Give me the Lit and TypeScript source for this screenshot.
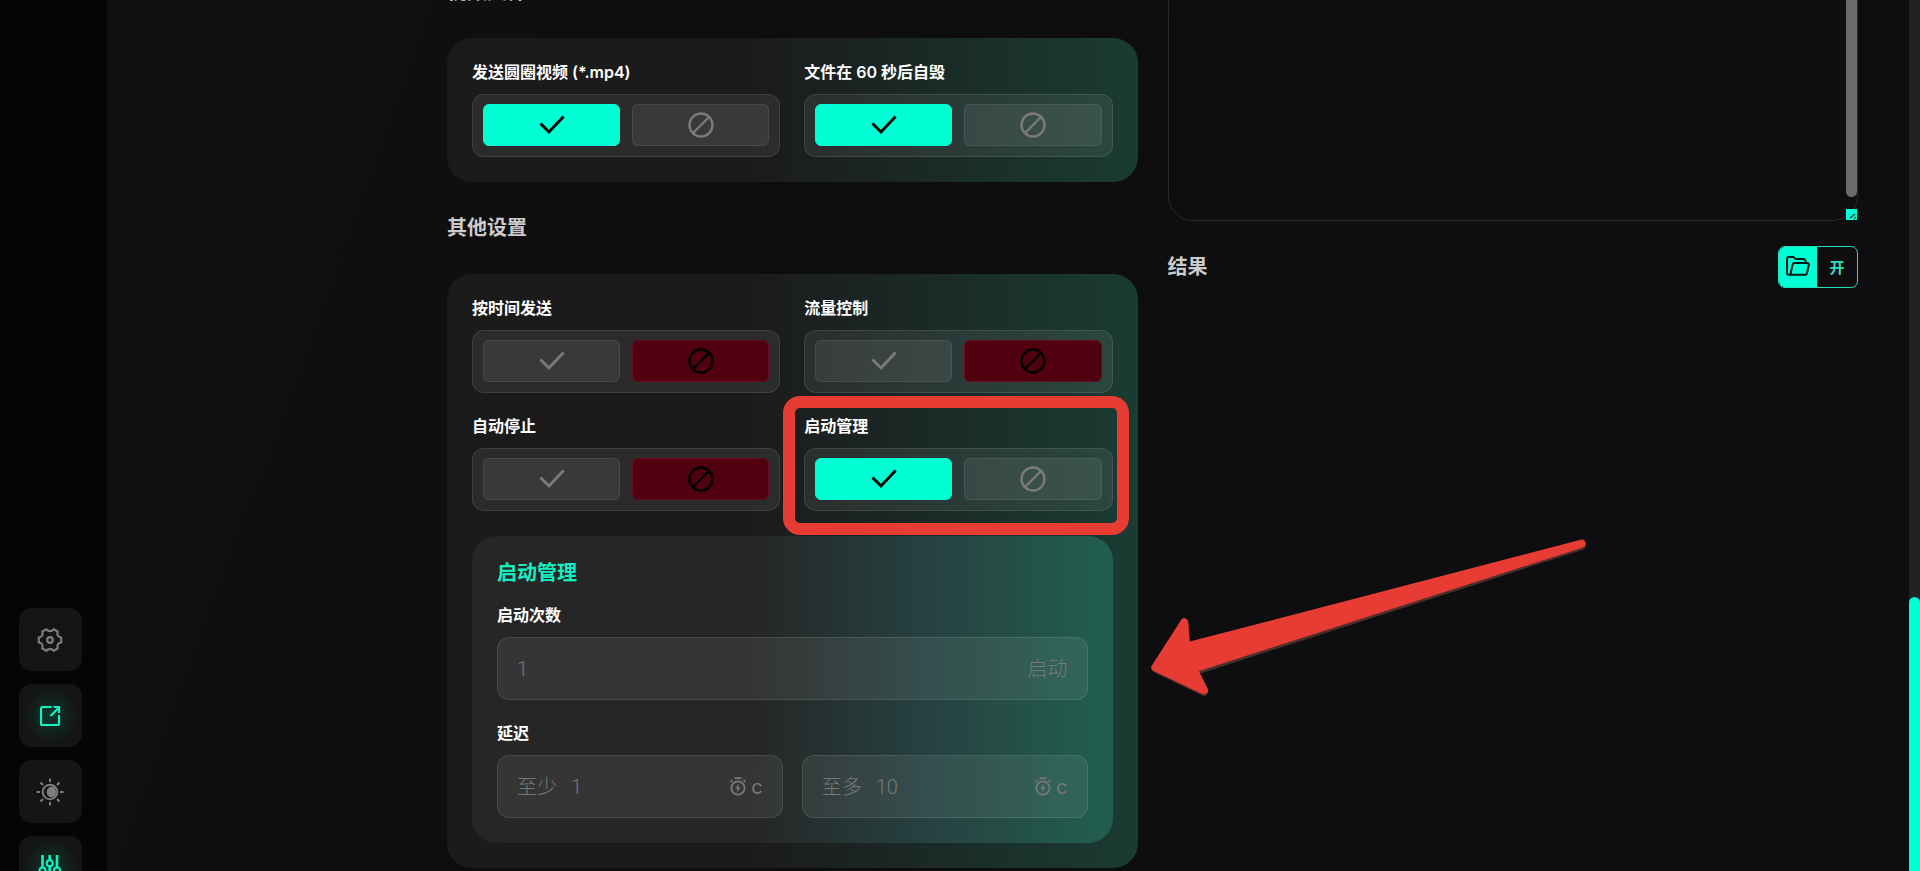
import { LitElement, html, css, svg, nothing } from "lit";
import { customElement, property, state } from "lit/decorators.js";
import { classMap } from "lit/directives/class-map.js";

const checkIcon = html`<svg width="26" height="20" viewBox="0 0 26 20" fill="none" stroke="currentColor" stroke-width="2.9" aria-hidden="true">
  <path d="M1.500 8.500 10 17 24.600 1.600" />
</svg>`;

const banIcon = html`<svg width="26" height="26" viewBox="0 0 26 26" fill="none" stroke="currentColor" stroke-width="2.4" aria-hidden="true">
  <circle cx="13" cy="13" r="11.500" /><path d="M5 21 21 5" />
</svg>`;

const timerIcon = html`<svg width="16" height="19" viewBox="0 0 16 19" fill="none" stroke="currentColor" stroke-width="1.9" aria-hidden="true">
  <path d="M4.600 1.200h6.800" /><circle cx="8" cy="11" r="6.600" />
  <path d="M.8 4.800 2.400 3.200M15.200 4.800 13.600 3.200" />
  <path d="M9 6.600 5.200 11.800h2.300l-.6 3.600 3.800-5.200H8.400z" fill="currentColor" stroke="none" />
</svg>`;

const folderIcon = html`<svg width="24" height="20" viewBox="0 0 24 20" fill="none" stroke="currentColor" stroke-width="2" stroke-linejoin="round" aria-hidden="true">
  <path d="M4.400 18.800H3A2 2 0 0 1 1 16.800V3A2 2 0 0 1 3 1h3.800a2 2 0 0 1 1.500.7L9.600 3h7.600a2.400 2.400 0 0 1 2.400 2.400v1.400" />
  <path d="M4.400 18.800 6.600 8.600a2 2 0 0 1 2-1.600h12.600a1.600 1.600 0 0 1 1.600 2l-1.800 8.200a2 2 0 0 1-2 1.600z" />
</svg>`;

const navIcons = {
  gear: svg`<path stroke-linejoin="round" stroke-width="2.200" d="M24.200 15.400Q19.100 16.500 20.800 21.400L16.700 23.800Q13 20 9.300 23.800L5.200 21.400Q6.900 16.500 1.800 15.400V10.600Q6.900 9.500 5.200 4.600L9.300 2.200Q13 6 16.700 2.200L20.800 4.600Q19.100 9.500 24.200 10.600Z" /><circle cx="13" cy="13" r="2.800" stroke-width="2.200" />`,
  open: svg`<path stroke-width="2.200" d="M14.500 4H5.500a1.500 1.500 0 0 0-1.500 1.500v15A1.500 1.500 0 0 0 5.500 22h15a1.500 1.500 0 0 0 1.500-1.500V12M13.500 13 22 4.500M16.500 4H22v6" />`,
  theme: svg`<circle cx="13" cy="13" r="7.300" /><path d="M17 8a5.400 5.400 0 1 0 0 10a7 7 0 0 0 0-10z" fill="currentColor" stroke="none" /><path d="M13 3V-.5M13 23v3.500M3 13H-.5M23 13h3.500M6 6 3.500 3.500M20 6l2.500-2.500M6 20l-2.500 2.500M20 20l2.500 2.500" />`,
  sliders: svg`<path stroke-width="2.600" d="M5.500 0V12.500M5.500 18.500v5M12.700 0v5.300M12.700 11.500v12M20 0V12.500M20 18.500v5" /><circle cx="5.500" cy="15.500" r="3" /><circle cx="12.700" cy="8.200" r="3" /><circle cx="20" cy="15.500" r="3" />`,
};

type NavIcon = keyof typeof navIcons;

@customElement("side-nav")
class SideNav extends LitElement {
  static styles = css`
    :host {
      display: flex;
      flex: 0 0 107px;
      flex-direction: column;
      justify-content: flex-end;
      background: #050505;
    }
    .list {
      display: flex;
      flex-direction: column;
      gap: 13px;
      margin: 0 0 -28px 19px;
    }
    .item {
      display: grid;
      place-items: center;
      width: 63px;
      height: 63px;
      padding: 0 2px 0 0;
      border: 0;
      border-radius: 13px;
      background: #151515;
      color: #7d7d7d;
    }
    .item.active {
      color: #12f3c5;
      background: radial-gradient(circle, #0c3a2f 0, #11251f 32%, #151515 62%);
    }
  `;

  private items: { icon: NavIcon; label: string; active: boolean }[] = [
    { icon: "gear", label: "设置", active: false },
    { icon: "open", label: "打开", active: true },
    { icon: "theme", label: "主题", active: false },
    { icon: "sliders", label: "参数", active: true },
  ];

  render() {
    return html`<nav class="list">
      ${this.items.map(
        (i) => html`<button class=${classMap({ item: true, active: i.active })} aria-label=${i.label}>
          <svg width="26" height="26" viewBox="0 0 26 26" fill="none" stroke="currentColor" stroke-width="2" overflow="visible" aria-hidden="true">
            ${navIcons[i.icon]}
          </svg>
        </button>`
      )}
    </nav>`;
  }
}

@customElement("toggle-field")
class ToggleField extends LitElement {
  static styles = css`
    :host {
      display: block;
      min-width: 0;
    }
    .label {
      margin-bottom: 13px;
      color: #fff;
      font-size: 16px;
      font-weight: 600;
      line-height: 18px;
      white-space: nowrap;
    }
    .group {
      display: grid;
      grid-template-columns: 1fr 1fr;
      gap: 12px;
      box-sizing: border-box;
      height: 63px;
      padding: 9px 10px 10px;
      border: 1px solid rgba(255, 255, 255, 0.1);
      border-radius: 12px;
      background: rgba(255, 255, 255, 0.07);
    }
    .option {
      display: grid;
      place-items: center;
      padding: 0;
      border: 1px solid rgba(255, 255, 255, 0.08);
      border-radius: 6px;
      background: rgba(255, 255, 255, 0.07);
      color: #7a7a7a;
    }
    .option.on {
      border-color: #00ffd5;
      background: #00ffd5;
      color: #000;
    }
    .option.off {
      border-color: #6b0a1c;
      background: #50000f;
      color: #000;
    }
  `;

  @property() label = "";
  @property({ type: Boolean }) checked = false;

  render() {
    return html`
      <div class="label" id="label">${this.label}</div>
      <div class="group" role="group" aria-labelledby="label">
        <button class=${classMap({ option: true, on: this.checked })} aria-label="启用" aria-pressed=${this.checked} @click=${() => (this.checked = true)}>
          ${checkIcon}
        </button>
        <button class=${classMap({ option: true, off: !this.checked })} aria-label="停用" aria-pressed=${!this.checked} @click=${() => (this.checked = false)}>
          ${banIcon}
        </button>
      </div>
    `;
  }
}

@customElement("value-box")
class ValueBox extends LitElement {
  static styles = css`
    :host {
      display: block;
      min-width: 0;
    }
    .box {
      display: flex;
      align-items: center;
      gap: 14px;
      box-sizing: border-box;
      height: 63px;
      padding: 0 19px;
      border: 1px solid rgba(255, 255, 255, 0.1);
      border-radius: 12px;
      background: rgba(255, 255, 255, 0.07);
      color: #787878;
      font-size: 20px;
      font-weight: 300;
      line-height: 26px;
    }
    .input {
      flex: 1;
      min-width: 0;
      padding: 0;
      border: 0;
      outline: 0;
      background: none;
      color: inherit;
      font: inherit;
      font-family: Roboto, sans-serif;
    }
    .unit {
      display: flex;
      align-items: center;
      gap: 5px;
    }
    .seconds {
      font-family: Inter, sans-serif;
      font-weight: 400;
    }
  `;

  @property() prefixText = "";
  @property() suffix = "";
  @property() value = "";
  @property() name = "";

  render() {
    return html`<label class="box">
      ${this.prefixText ? html`<span>${this.prefixText}</span>` : nothing}
      <input class="input" aria-label=${this.name} .value=${this.value} />
      ${this.suffix
        ? html`<span>${this.suffix}</span>`
        : html`<span class="unit">${timerIcon}<span class="seconds">c</span></span>`}
    </label>`;
  }
}

@customElement("app-root")
class AppRoot extends LitElement {
  static styles = css`
    :host {
      display: flex;
      height: 100vh;
      overflow: hidden;
      background: linear-gradient(110deg, #121212 0, #0e0e0e 30%, #0e0d0f 60%, #0e0d0f 100%);
      font-family: Inter, "Noto Sans CJK SC", sans-serif;
    }
    .main {
      display: grid;
      flex: 1;
      grid-template-columns: minmax(0, 1fr) minmax(0, 1fr);
      align-items: start;
      gap: 30px;
      min-width: 0;
      padding: 0 51px 0 340px;
    }
    .settings {
      display: grid;
      gap: 32px;
      margin-top: -22px;
    }
    .heading {
      margin: 0;
      color: #cbcbcb;
      font-size: 20px;
      font-weight: 700;
      line-height: 28px;
    }
    .card {
      position: relative;
      display: grid;
      grid-template-columns: minmax(0, 1fr) minmax(0, 1fr);
      gap: 24px;
      padding: 25px;
      border-radius: 25px;
      background: linear-gradient(90deg, #1b1b1b 44%, #1b2725 65%, #1a3c33 100%);
    }
    .panel {
      grid-column: 1 / -1;
      margin-top: 1px;
      padding: 25px;
      border-radius: 25px;
      background: linear-gradient(90deg, #262626 44%, #264040 70%, #225f4f 100%);
    }
    .panel-title {
      margin: 0 0 21px;
      color: #14efc2;
      font-size: 20px;
      font-weight: 700;
      line-height: 24px;
    }
    .label {
      margin-bottom: 13px;
      color: #fff;
      font-size: 16px;
      font-weight: 600;
      line-height: 18px;
    }
    .range {
      display: grid;
      grid-template-columns: 1fr 1fr;
      gap: 19px;
    }
    .count {
      margin-bottom: 24px;
    }
    .marked {
      position: relative;
    }
    .frame {
      position: absolute;
      inset: -21px -16px -24px -21px;
      border: 12px solid #e63c33;
      border-radius: 17px;
      pointer-events: none;
    }
    .arrow {
      position: absolute;
      top: 246px;
      left: calc(100% + 2px);
      pointer-events: none;
    }
    .editor {
      position: relative;
      height: 221px;
      overflow: hidden;
    }
    .text {
      display: block;
      box-sizing: border-box;
      width: 100%;
      height: 271px;
      margin: -50px 0 0;
      padding: 20px;
      border: 1px solid #2d2c2e;
      border-radius: 25px;
      outline: 0;
      background: none;
      color: #ccc;
      resize: none;
    }
    .thumb {
      position: absolute;
      top: -20px;
      right: 1px;
      bottom: 24px;
      width: 11px;
      border-radius: 6px;
      background: #6c6a6d;
    }
    .grip {
      position: absolute;
      right: 1px;
      bottom: 1px;
      width: 11px;
      height: 11px;
      background: #00ffd5;
    }
    .results {
      display: flex;
      align-items: center;
      justify-content: space-between;
      margin-top: 25px;
    }
    .open {
      display: grid;
      grid-template-columns: 38px 40px;
      box-sizing: border-box;
      height: 42px;
      padding: 0;
      overflow: hidden;
      border: 1px solid #1de0b9;
      border-radius: 7px;
      background: none;
      color: #2fe0bb;
      font-family: inherit;
      font-size: 15px;
      font-weight: 700;
    }
    .open-icon,
    .open-text {
      display: grid;
      place-items: center;
      padding-bottom: 2px;
    }
    .open-icon {
      background: #00ffd5;
      color: #061a16;
    }
    .track {
      display: flex;
      flex: 0 0 11px;
      align-items: flex-end;
      background: #222122;
    }
    .page-thumb {
      width: 100%;
      height: 31.5%;
      border-radius: 6px 6px 0 0;
      background: #00ffd5;
    }
  `;

  @state() private basics = [
    { label: "发送圆圈视频 (*.mp4)", checked: true },
    { label: "文件在 60 秒后自毁", checked: true },
  ];

  @state() private others = [
    { label: "按时间发送", checked: false },
    { label: "流量控制", checked: false },
    { label: "自动停止", checked: false },
  ];

  private field(item: { label: string; checked: boolean }) {
    return html`<toggle-field .label=${item.label} .checked=${item.checked}></toggle-field>`;
  }

  render() {
    return html`
      <side-nav></side-nav>
      <main class="main">
        <section class="settings">
          <h2 class="heading">视频文件</h2>
          <div class="card">${this.basics.map((i) => this.field(i))}</div>
          <h2 class="heading">其他设置</h2>
          <div class="card">
            ${this.others.map((i) => this.field(i))}
            <div class="marked">
              ${this.field({ label: "启动管理", checked: true })}
              <div class="frame"></div>
            </div>
            <div class="panel">
              <h3 class="panel-title">启动管理</h3>
              <div class="label">启动次数</div>
              <value-box class="count" name="启动次数" value="1" suffix="启动"></value-box>
              <div class="label">延迟</div>
              <div class="range">
                <value-box name="至少" .prefixText=${"至少"} value="1"></value-box>
                <value-box name="至多" .prefixText=${"至多"} value="10"></value-box>
              </div>
            </div>
            <svg class="arrow" width="460" height="190" viewBox="0 0 1380 570" aria-hidden="true">
              <g stroke-width="24" stroke-linejoin="round">
                <path d="M47 446 132 313 139 383 1325 77V78L159 455 192 516Z" fill="#4a2f2d" stroke="#4a2f2d" />
                <path d="M46 442 133 307 138 380 1325 71 160 446 192 511Z" fill="#e63c33" stroke="#e63c33" />
              </g>
            </svg>
          </div>
        </section>
        <section>
          <div class="editor">
            <textarea class="text" aria-label="文本"></textarea>
            <div class="thumb"></div>
            <svg class="grip" viewBox="0 0 11 11" fill="none" stroke="#1d4f45" stroke-width="1.500" aria-hidden="true">
              <path d="M4 9 9 5M8 10l2-2" />
            </svg>
          </div>
          <div class="results">
            <h2 class="heading">结果</h2>
            <button class="open">
              <span class="open-icon">${folderIcon}</span>
              <span class="open-text">开</span>
            </button>
          </div>
        </section>
      </main>
      <div class="track"><div class="page-thumb"></div></div>
    `;
  }
}
